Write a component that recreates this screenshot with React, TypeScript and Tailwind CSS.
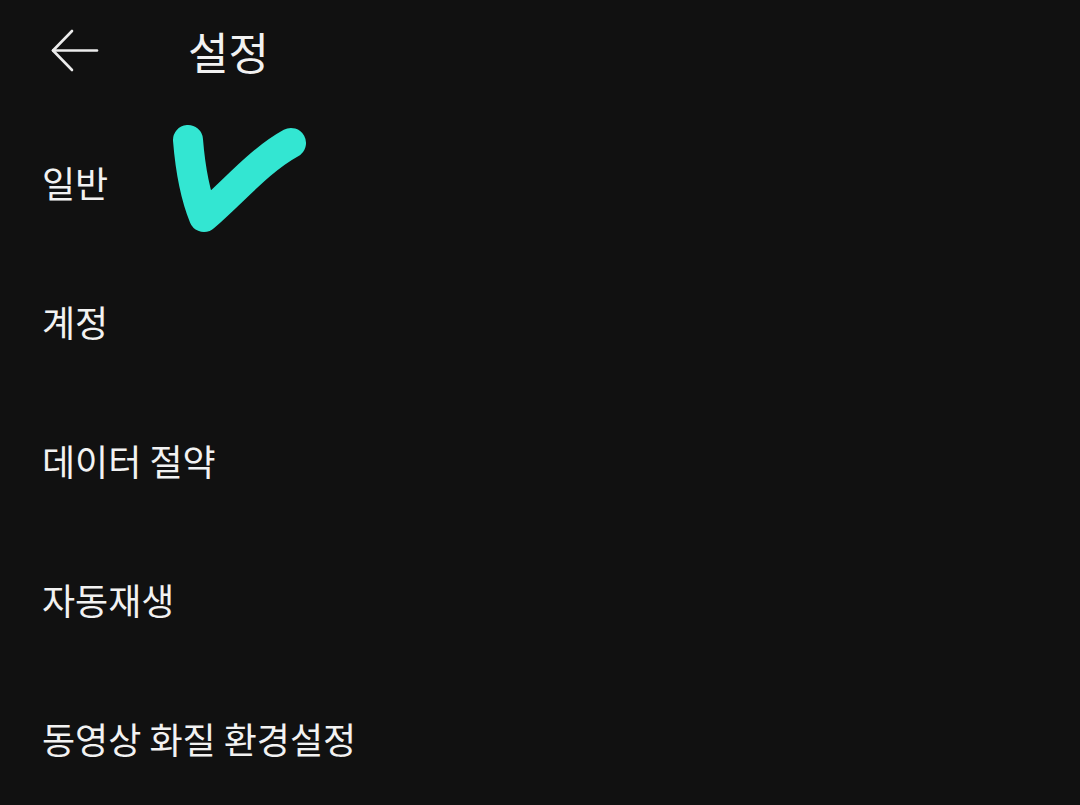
import { ReactNode } from 'react';

const items = ['일반', '계정', '데이터 절약', '자동재생', '동영상 화질 환경설정'];

const font = { fontFamily: '"Noto Sans CJK KR", "Noto Sans", sans-serif' };

const Row = (props: { children: ReactNode }) => (
  <div className="h-[139px] flex items-center pl-[42px] text-[36px] text-[#f2f2f2]">
    {props.children}
  </div>
);

const App = () => {
  return (
    <div className="relative w-[1080px] h-[805px] bg-[#111111] overflow-hidden" style={font}>
      {/* header */}
      <div className="h-[106px] flex items-center pl-[50px] pb-[4px]">
        <svg width="50" height="46" viewBox="0 0 50 46" fill="none" stroke="#ececec" strokeWidth="2.6" strokeLinecap="round" strokeLinejoin="round">
          <path d="M47 22.5H3" />
          <path d="M22 3L3 22.5L22 42" />
        </svg>
        <span className="ml-[88px] text-[44px] font-normal text-[#f2f2f2]">설정</span>
      </div>

      <div className="flex flex-col mt-[6px]">
        {items.map((item) => (
          <Row key={item}>{item}</Row>
        ))}
      </div>

      {/* hand drawn check */}
      <svg className="absolute left-[165px] top-[115px]" width="160" height="135" viewBox="0 0 160 135" fill="none">
        <path
          d="M23 25C25 50 30 80 39 102C70 75 95 45 126 28"
          stroke="#33e6d2"
          strokeWidth="30"
          strokeLinecap="round"
          strokeLinejoin="round"
        />
      </svg>
    </div>
  );
};

export default App;
